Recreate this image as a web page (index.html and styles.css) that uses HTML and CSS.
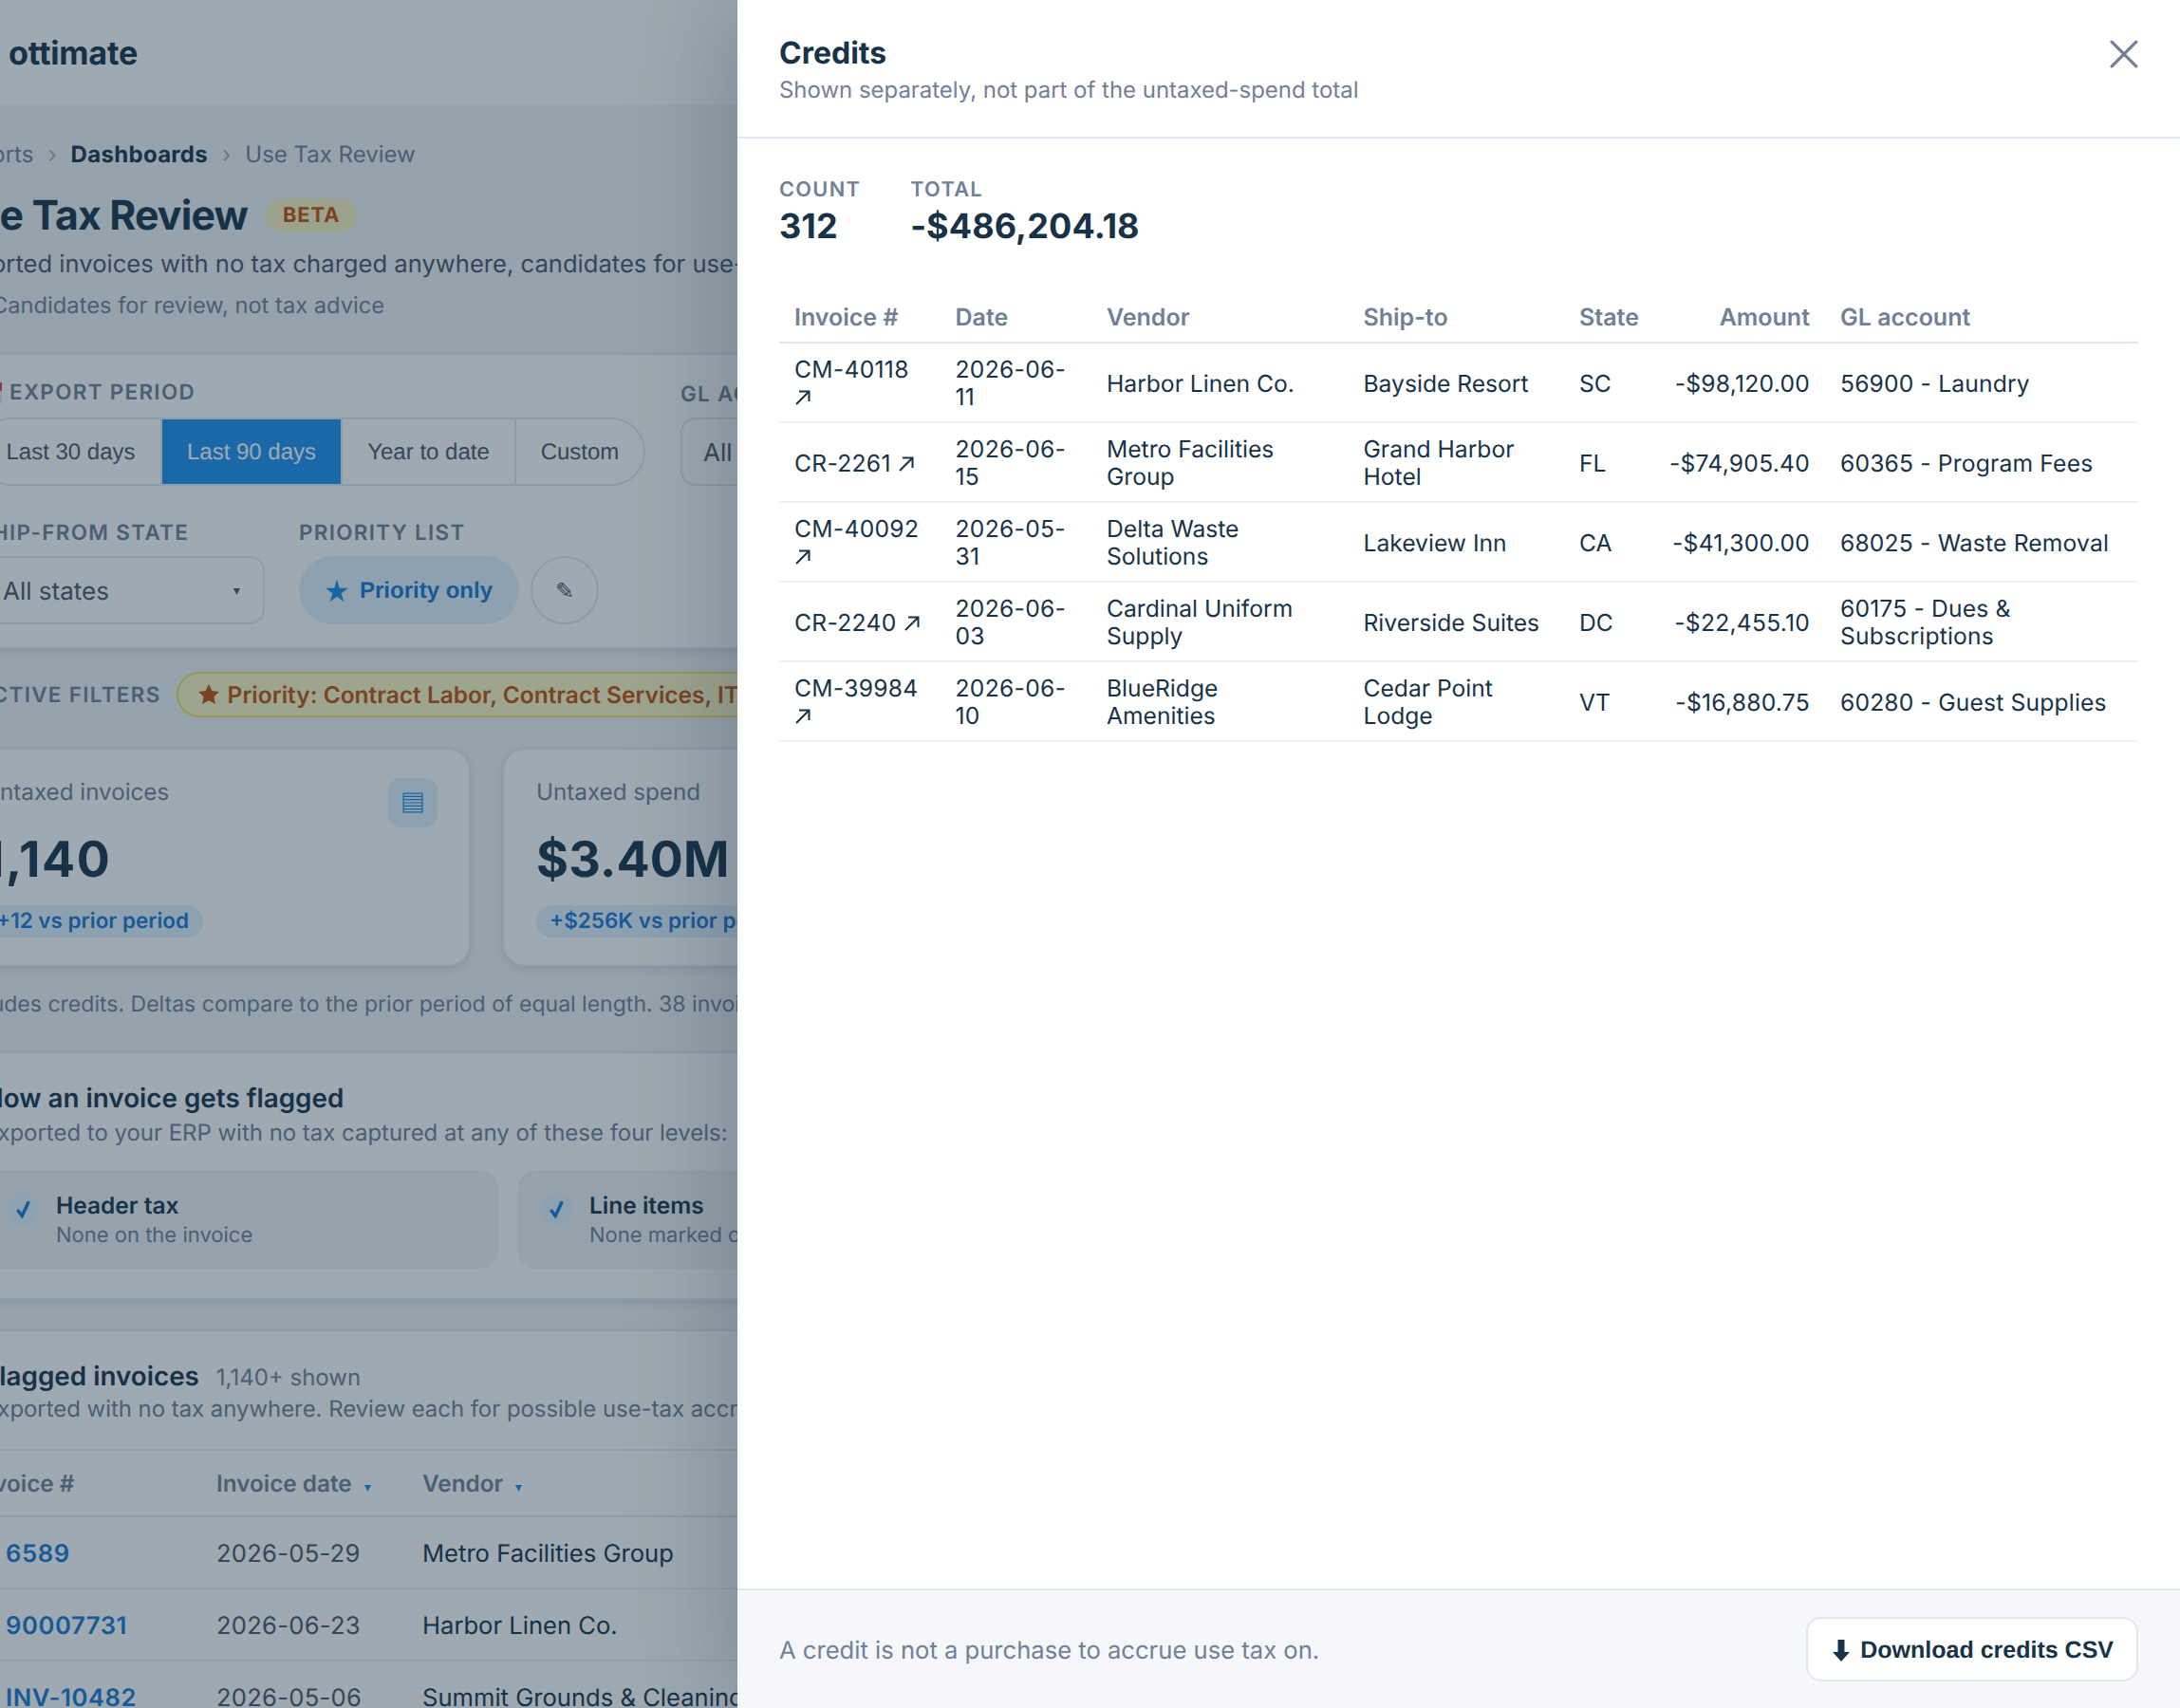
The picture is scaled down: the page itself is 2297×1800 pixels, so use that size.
FILE: index.html
```html
<!DOCTYPE html>
<html lang="en">

<head>
    <meta charset="UTF-8">
    <title>Use Tax Review</title>
    <link rel="stylesheet" href="styles.css">
</head>

<body>
    <div class="app">
        <header class="topbar"><span class="logo">ottimate</span></header>
        <main class="page">
            <nav class="crumbs">
                <span>Reports</span><i>›</i><b>Dashboards</b><i>›</i><span>Use Tax Review</span>
            </nav>
            <div class="title-row">
                <h1>Use Tax Review</h1>
                <span class="beta">BETA</span>
            </div>
            <p class="lead">Exported invoices with no tax charged anywhere, candidates for use-tax accrual.</p>
            <p class="hint">Candidates for review, not tax advice</p>

            <section class="card filters">
                <div class="filter-row">
                    <div class="field period">
                        <label class="cap"><span class="cal"></span>EXPORT PERIOD</label>
                        <div class="segmented">
                            <button>Last 30 days</button>
                            <button class="active">Last 90 days</button>
                            <button>Year to date</button>
                            <button>Custom</button>
                        </div>
                    </div>
                    <div class="field gl">
                        <label class="cap">GL ACCOUNT</label>
                        <div class="select">All accounts</div>
                    </div>
                </div>
                <div class="filter-row second">
                    <div class="field state">
                        <label class="cap">SHIP-FROM STATE</label>
                        <div class="select">All states
                            <svg class="caret" viewBox="0 0 7 7"><path d="M0 0h7L3.5 7z"/></svg>
                        </div>
                    </div>
                    <div class="field">
                        <label class="cap">PRIORITY LIST</label>
                        <div class="priority">
                            <button class="pill">
                                <svg class="star" viewBox="0 0 24 24"><path d="M12 0l2.8 8.8H24l-7.4 5.4 2.8 9L12 17.8l-7.4 5.4 2.8-9L0 8.8h9.2z"/></svg>Priority only
                            </button>
                            <button class="edit">✎</button>
                        </div>
                    </div>
                </div>
            </section>

            <div class="active-filters">
                <span class="cap">ACTIVE FILTERS</span>
                <span class="chip">
                    <svg class="star" viewBox="0 0 24 24"><path d="M12 1l3.3 7 7.7 1-5.6 5.3 1.4 7.7L12 18.3 5.2 22l1.4-7.7L1 9l7.7-1z"/></svg>Priority: Contract Labor, Contract Services, IT Services
                </span>
            </div>

            <div class="stats">
                <div class="stat">
                    <div class="stat-label">Untaxed invoices</div>
                    <div class="stat-value count">1,140</div>
                    <span class="delta">+12 vs prior period</span>
                    <span class="stat-icon">
                        <svg viewBox="0 0 20 20"><path d="M1 1h18v18H1zM1 4h18M1 7h18M1 10h18M1 13h18M1 16h18"/></svg>
                    </span>
                </div>
                <div class="stat">
                    <div class="stat-label">Untaxed spend</div>
                    <div class="stat-value">$3.40M</div>
                    <span class="delta">+$256K vs prior period</span>
                </div>
            </div>
            <p class="note"><span>Excludes credits. Deltas compare to the prior period of equal length. 38 invoices</span></p>

            <section class="card how">
                <h2>How an invoice gets flagged</h2>
                <p>Exported to your ERP with no tax captured at any of these four levels:</p>
                <div class="levels">
                    <div class="level">
                        <span class="check"><svg viewBox="0 0 16 22"><path d="M2 13l4.5 6L14 3"/></svg></span>
                        <div><strong>Header tax</strong><small>None on the invoice</small></div>
                    </div>
                    <div class="level">
                        <span class="check"><svg viewBox="0 0 16 22"><path d="M2 13l4.5 6L14 3"/></svg></span>
                        <div><strong>Line items</strong><small>None marked on lines</small></div>
                    </div>
                </div>
            </section>

            <section class="card flagged">
                <div class="flagged-head">
                    <div><h2>Flagged invoices</h2><span>1,140+ shown</span></div>
                    <p>Exported with no tax anywhere. Review each for possible use-tax accrual.</p>
                </div>
                <div class="grid head">
                    <span>Invoice #</span>
                    <span>Invoice date <svg class="caret" viewBox="0 0 7 7"><path d="M0 0h7L3.5 7z"/></svg></span>
                    <span>Vendor <svg class="caret" viewBox="0 0 7 7"><path d="M0 0h7L3.5 7z"/></svg></span>
                </div>
                <div class="grid"><a>6589</a><time>2026-05-29</time><span>Metro Facilities Group</span></div>
                <div class="grid"><a>90007731</a><time>2026-06-23</time><span>Harbor Linen Co.</span></div>
                <div class="grid"><a>INV-10482</a><time>2026-05-06</time><span>Summit Grounds &amp; Cleaning</span></div>
            </section>
        </main>
    </div>

    <div class="overlay"></div>

    <aside class="drawer">
        <header class="drawer-head">
            <div>
                <h2>Credits</h2>
                <p>Shown separately, not part of the untaxed-spend total</p>
            </div>
            <button class="close"><svg viewBox="0 0 28 28"><path d="M2 2l24 24M26 2L2 26"/></svg></button>
        </header>
        <div class="drawer-body">
            <div class="totals">
                <div><span class="cap">COUNT</span><strong>312</strong></div>
                <div><span class="cap">TOTAL</span><strong>-$486,204.18</strong></div>
            </div>
            <table class="credits">
                <colgroup>
                    <col class="c-inv"><col class="c-date"><col class="c-vendor"><col class="c-ship"><col class="c-state"><col class="c-amt"><col>
                </colgroup>
                <thead>
                    <tr><th>Invoice #</th><th>Date</th><th>Vendor</th><th>Ship-to</th><th>State</th><th class="num">Amount</th><th>GL account</th></tr>
                </thead>
                <tbody>
                    <tr><td class="code">CM-40118 <svg class="ext" viewBox="0 0 16 16"><path d="M1 15L14.5 1.5M4 1.5h10.5V12"/></svg></td><td class="code">2026-06-<wbr>11</td><td>Harbor Linen Co.</td><td>Bayside Resort</td><td>SC</td><td class="num">-$98,120.00</td><td>56900 - Laundry</td></tr>
                    <tr><td class="code">CR-2261 <svg class="ext" viewBox="0 0 16 16"><path d="M1 15L14.5 1.5M4 1.5h10.5V12"/></svg></td><td class="code">2026-06-<wbr>15</td><td>Metro Facilities Group</td><td>Grand Harbor Hotel</td><td>FL</td><td class="num">-$74,905.40</td><td>60365 - Program Fees</td></tr>
                    <tr><td class="code">CM-40092 <svg class="ext" viewBox="0 0 16 16"><path d="M1 15L14.5 1.5M4 1.5h10.5V12"/></svg></td><td class="code">2026-05-<wbr>31</td><td>Delta Waste Solutions</td><td>Lakeview Inn</td><td>CA</td><td class="num">-$41,300.00</td><td>68025 - Waste Removal</td></tr>
                    <tr><td class="code">CR-2240 <svg class="ext" viewBox="0 0 16 16"><path d="M1 15L14.5 1.5M4 1.5h10.5V12"/></svg></td><td class="code">2026-06-<wbr>03</td><td>Cardinal Uniform Supply</td><td>Riverside Suites</td><td>DC</td><td class="num">-$22,455.10</td><td>60175 - Dues &amp; Subscriptions</td></tr>
                    <tr><td class="code">CM-39984 <svg class="ext" viewBox="0 0 16 16"><path d="M1 15L14.5 1.5M4 1.5h10.5V12"/></svg></td><td class="code">2026-06-<wbr>10</td><td>BlueRidge Amenities</td><td>Cedar Point Lodge</td><td>VT</td><td class="num">-$16,880.75</td><td>60280 - Guest Supplies</td></tr>
                </tbody>
            </table>
        </div>
        <footer class="drawer-foot">
            <span>A credit is not a purchase to accrue use tax on.</span>
            <button class="download"><svg viewBox="0 0 18 23"><path d="M5.5 0h7v13H18l-9 10-9-10h5.5z"/></svg>Download credits CSV</button>
        </footer>
    </aside>
</body>

</html>
```
FILE: styles.css
```css
* {
    box-sizing: border-box;
    margin: 0;
    padding: 0;
}

body {
    width: 2297px;
    height: 1800px;
    overflow: hidden;
    background: #f2f4f7;
    color: #183247;
    font-family: Inter, sans-serif;
    font-size: 24px;
    line-height: 29px;
    text-rendering: geometricPrecision;
}

button {
    padding-top: 1px;
    font-family: "Liberation Sans", Arial, sans-serif;
    font-size: 24px;
    background: none;
    border: 0;
    text-rendering: inherit;
}

.app {
    height: 1800px;
    overflow: hidden;
    white-space: nowrap;
}

.topbar {
    height: 110px;
    padding: 37px 0 0 9px;
    background: #fff;
}

.logo {
    font-size: 34.2px;
    line-height: 40px;
    font-weight: 700;
    letter-spacing: -0.2px;
}

/* the page is scrolled sideways a little, its left edge is off screen */
.page {
    margin-left: -54px;
    width: 2400px;
}

.cap {
    display: block;
    padding-top: 1px;
    height: 24px;
    font-size: 22.4px;
    line-height: 24px;
    font-weight: 600;
    letter-spacing: 1.34px;
    color: #718096;
}

.crumbs {
    display: flex;
    gap: 15px;
    padding-top: 38px;
    margin-left: 1.5px;
    height: 77px;
    color: #718096;
}

.crumbs i {
    font-style: normal;
    color: #a0aec0;
}

.crumbs b {
    font-weight: 700;
    letter-spacing: .3px;
    color: #183247;
}

.title-row {
    display: flex;
    align-items: center;
    gap: 19px;
    margin-top: 14px;
    height: 52px;
}

h1 {
    padding-top: 1px;
    font-size: 42.8px;
    line-height: 52px;
    font-weight: 700;
    letter-spacing: -0.86px;
}

.beta {
    height: 34px;
    padding: 0 18px;
    border-radius: 17px;
    background: #fef3c0;
    color: #c2500c;
    font-size: 21.76px;
    line-height: 34px;
    font-weight: 700;
    letter-spacing: 1px;
}

.lead {
    margin-top: 10px;
    font-size: 25.6px;
    line-height: 32px;
    color: #4a5568;
}

.hint {
    margin: 12px 0 0 45px;
    font-size: 23.7px;
    color: #718096;
}

.card {
    background: #fff;
    border: 2px solid #e2ecf5;
    box-shadow: 0 3px 8px rgba(24, 50, 71, .12);
    border-radius: 24px;
}

.filters {
    margin-top: 36px;
    height: 312px;
    padding: 27px 0 0 28px;
}

.filter-row {
    display: flex;
    gap: 37px;
    align-items: flex-end;
}

.filter-row.second {
    gap: 36px;
    margin-top: 37px;
}

.cal {
    display: inline-block;
    width: 24px;
    height: 22px;
    margin-right: 8px;
    vertical-align: -4px;
    border-top: 9px solid #d34b4b;
    background: #dfe5ea;
}

.segmented {
    display: flex;
    width: 704px;
    height: 72px;
    margin-top: 15px;
    border: 2px solid #e2e8f0;
    border-radius: 36px;
    overflow: hidden;
}

.period .cap {
    margin-left: 2px;
}

.segmented button {
    flex: 0 0 190px;
    color: #4a5568;
    border-right: 2px solid #e2e8f0;
}

.segmented button:first-child {
    flex-basis: 193px;
    padding-left: 2px;
}

.segmented button:nth-child(3) {
    flex-basis: 183px;
}

.segmented button:last-child {
    flex: 1;
    border: 0;
}

.segmented .active {
    background: #1e90f0;
    color: #fff;
}

.select {
    display: flex;
    align-items: center;
    justify-content: space-between;
    height: 72px;
    margin-top: 13px;
    padding: 2px 24px 0 25px;
    border: 2px solid #e2e8f0;
    border-radius: 16px;
    font-size: 26px;
    color: #4a5568;
}

.gl {
    width: 400px;
}

.gl .select {
    padding-left: 22px;
}

.state {
    width: 303px;
}

.caret {
    width: 7px;
    height: 7px;
    fill: currentColor;
}

.priority {
    display: flex;
    gap: 12px;
    margin-top: 13px;
}

.pill {
    display: flex;
    align-items: center;
    width: 232px;
    height: 72px;
    gap: 12px;
    padding-left: 28px;
    border-radius: 36px;
    background: #e3f2fd;
    color: #1976d2;
    font-weight: 700;
}

.star {
    width: 24px;
    height: 24px;
    fill: #1e88e5;
}

.edit {
    width: 72px;
    height: 72px;
    border: 2px solid #e2e8f0;
    border-radius: 50%;
    color: #4a5568;
    font-family: "DejaVu Sans", sans-serif;
}

.active-filters {
    display: flex;
    align-items: center;
    gap: 16px;
    margin: 24px 0 0 29px;
    height: 48px;
}

.chip {
    display: flex;
    align-items: center;
    gap: 8px;
    height: 48px;
    padding: 0 20px;
    border: 2px solid #f6e05e;
    border-radius: 24px;
    background: #fef9c3;
    color: #c2500c;
    font-size: 24.5px;
    font-weight: 600;
}

.chip .star {
    fill: #c2500c;
}

.stats {
    display: grid;
    grid-template-columns: 550px 550px;
    gap: 33px;
    margin-top: 32px;
}

.stat {
    position: relative;
    height: 231px;
    padding: 30px 34px;
    background: #fff;
    border: 2px solid #e2ecf5;
    border-radius: 24px;
    box-shadow: 0 3px 8px rgba(24, 50, 71, .12);
}

.stat-label {
    font-size: 24.2px;
    color: #718096;
}

.stat-value {
    margin-top: 25px;
    font-size: 52px;
    line-height: 64px;
    font-weight: 700;
    letter-spacing: .2px;
}

.stat-value.count {
    letter-spacing: 1.5px;
}

.delta {
    display: inline-block;
    margin-top: 16px;
    height: 34px;
    padding: 0 15px 0 14px;
    border-radius: 17px;
    background: #e3f2fd;
    color: #1976d2;
    font-size: 22.5px;
    line-height: 34px;
    font-weight: 600;
}

.stat-icon {
    position: absolute;
    top: 30px;
    right: 33px;
    display: flex;
    align-items: center;
    justify-content: center;
    width: 52px;
    height: 52px;
    border-radius: 14px;
    background: #e3f2fd;
}

.stat-icon svg {
    width: 22px;
    height: 22px;
    fill: none;
    stroke: #1e88e5;
    stroke-width: 1.1;
}

.note {
    display: flex;
    height: 29px;
    margin-top: 25px;
    font-size: 23.04px;
    color: #718096;
}

.how {
    margin-top: 35px;
    height: 262px;
    padding: 30px 0 0 35px;
}

h2 {
    font-size: 27.8px;
    line-height: 34px;
    font-weight: 600;
}

.how p {
    margin-top: 5px;
    font-size: 23.95px;
    color: #718096;
}

.levels {
    display: grid;
    grid-template-columns: 542px 542px;
    gap: 20px;
    margin-top: 25px;
}

.level {
    display: flex;
    gap: 18px;
    height: 104px;
    padding: 21px 24px;
    border-radius: 20px;
    background: #f2f4f7;
}

.level strong,
.level small {
    display: block;
    font-size: 24.5px;
    font-weight: 600;
    line-height: 32px;
}

.level small {
    font-size: 22px;
    font-weight: 400;
    line-height: 32px;
    color: #718096;
}

.check {
    display: flex;
    align-items: center;
    justify-content: center;
    width: 34px;
    height: 34px;
    margin-top: 3px;
    border-radius: 50%;
    background: #e3f2fd;
}

.check svg {
    width: 17px;
    height: 19px;
    fill: none;
    stroke: #1976d2;
    stroke-width: 4;
    stroke-linecap: round;
}

.flagged {
    margin-top: 31px;
    height: 500px;
}

.flagged-head {
    height: 126px;
    padding: 30px 0 0 35px;
    border-bottom: 2px solid #e2e8f0;
}

.flagged-head div {
    display: flex;
    align-items: baseline;
    gap: 18px;
}

.flagged-head span,
.flagged-head p {
    color: #718096;
}

.flagged-head p {
    margin-top: 3px;
    font-size: 23.9px;
}

.grid {
    display: grid;
    grid-template-columns: 222px 217px 600px;
    align-items: center;
    height: 76px;
    padding: 2px 0 0 58px;
    border-bottom: 2px solid #edf2f7;
    font-size: 25.6px;
}

.grid.head {
    height: 70px;
    padding-top: 0;
    border-color: #e2e8f0;
    font-size: 24.3px;
    font-weight: 600;
    color: #718096;
}

.head span:first-child {
    margin-left: -34px;
}

.head .caret {
    margin-left: 7px;
    fill: #1e88e5;
}

.grid a {
    color: #1976d2;
    font-weight: 600;
    letter-spacing: .6px;
}

.grid time {
    color: #4a5568;
    letter-spacing: .25px;
}

.overlay {
    position: absolute;
    inset: 0;
    width: 2297px;
    background: rgba(24, 49, 69, .42);
}

.drawer {
    position: absolute;
    top: 0;
    left: 777px;
    display: flex;
    flex-direction: column;
    width: 1520px;
    height: 1800px;
    background: #fff;
    box-shadow: -16px 0 96px rgba(24, 30, 60, .22);
}

.drawer-head {
    display: flex;
    justify-content: space-between;
    height: 146px;
    padding: 36px 44px 0;
    border-bottom: 2px solid #e2e8f0;
}

.drawer-head h2 {
    font-size: 32px;
    line-height: 39px;
    font-weight: 700;
}

.drawer-head p {
    margin-top: 5px;
    font-size: 23.95px;
    color: #718096;
}

.close {
    width: 30px;
    height: 30px;
    padding: 0;
    margin-top: 6px;
}

.close svg {
    width: 30px;
    height: 30px;
    fill: none;
    stroke: #718096;
    stroke-width: 3;
    stroke-linecap: round;
}

.drawer-body {
    flex: 1;
    padding: 41px 44px;
}

.drawer .cap {
    height: 25px;
    font-size: 21.76px;
    line-height: 25px;
    letter-spacing: 1.3px;
}

.totals {
    display: flex;
    gap: 52px;
    height: 120px;
}

.totals strong {
    display: block;
    margin-top: 4px;
    font-size: 36px;
    line-height: 44px;
    font-weight: 700;
    letter-spacing: .1px;
}

.credits {
    width: 1432px;
    table-layout: fixed;
    border-collapse: separate;
    border-spacing: 0;
}

.c-inv {
    width: 169.5px;
}

.c-date {
    width: 159.5px;
}

.c-vendor {
    width: 270.5px;
}

.c-ship {
    width: 227.5px;
}

.c-state {
    width: 97px;
}

.c-amt {
    width: 178px;
}

.credits th,
.credits td {
    padding: 13px 16px 11px;
    font-size: 24.64px;
    text-align: left;
    vertical-align: middle;
    border-bottom: 2px solid #edf2f7;
}

.credits th {
    height: 55px;
    padding: 14px 16px 10px;
    border-color: #e2e8f0;
    font-size: 25px;
    font-weight: 600;
    color: #718096;
}

.credits td:last-child {
    letter-spacing: .18px;
}

.credits .code {
    letter-spacing: .3px;
}

.credits .num {
    padding-left: 0;
    text-align: right;
    white-space: nowrap;
}

.credits td.num {
    letter-spacing: .25px;
}

.ext {
    width: 16px;
    height: 16px;
    margin-left: 1px;
    fill: none;
    stroke: #183247;
    stroke-width: 2;
}

.drawer-foot {
    display: flex;
    align-items: center;
    justify-content: space-between;
    height: 126px;
    padding: 0 44px;
    border-top: 2px solid #e2e8f0;
    background: #f5f7fb;
    color: #718096;
    font-size: 25.6px;
}

.drawer-foot span {
    padding-top: 2px;
}

.download {
    display: flex;
    align-items: center;
    gap: 11px;
    height: 68px;
    padding: 2px 24px 0 26px;
    border: 2px solid #e2e8f0;
    border-radius: 16px;
    background: #fff;
    color: #183247;
    font-size: 25px;
    font-weight: 700;
}

.download svg {
    width: 18px;
    height: 23px;
    fill: #183247;
}
```
